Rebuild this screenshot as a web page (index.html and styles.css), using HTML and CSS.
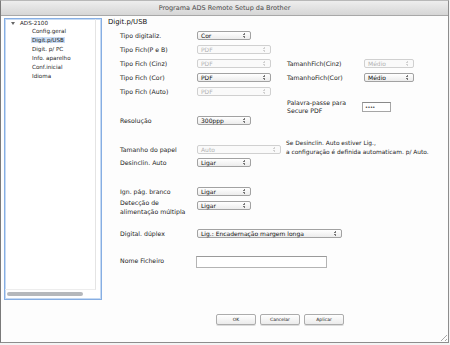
FILE: index.html
```html
<!DOCTYPE html>
<html lang="pt">
<head>
  <meta charset="UTF-8" />
  <title>Programa ADS Remote Setup da Brother</title>
  <link rel="stylesheet" href="styles.css">
</head>
<body>

<div class="window">
  <div class="titlebar">Programa ADS Remote Setup da Brother</div>

  <div class="content">
    <div class="tree">
      <div class="tree-list">
        <div class="node root"><span class="twisty"></span>ADS-2100</div>
        <div class="node">Config.geral</div>
        <div class="node"><span class="selected">Digit.p/USB</span></div>
        <div class="node">Digit. p/ PC</div>
        <div class="node">Info. aparelho</div>
        <div class="node">Conf.inicial</div>
        <div class="node">Idioma</div>
      </div>
      <div class="hscroll"></div>
    </div>

    <div class="panel">
      <h1>Digit.p/USB</h1>

      <div class="form">
        <div class="row">
          <span class="label">Tipo digitaliz.</span>
          <div class="select w-short"><span>Cor</span><i class="arrows"></i></div>
        </div>
        <div class="row">
          <span class="label">Tipo Fich(P e B)</span>
          <div class="select w-mid disabled"><span>PDF</span><i class="arrows"></i></div>
        </div>
        <div class="row r15">
          <span class="label">Tipo Fich (Cinz)</span>
          <div class="select w-mid disabled"><span>PDF</span><i class="arrows"></i></div>
          <span class="label">TamanhFich(Cinz)</span>
          <div class="select w-right disabled"><span>Médio</span><i class="arrows"></i></div>
        </div>
        <div class="row r13">
          <span class="label">Tipo Fich (Cor)</span>
          <div class="select w-mid"><span>PDF</span><i class="arrows"></i></div>
          <span class="label">TamanhoFich(Cor)</span>
          <div class="select w-right"><span>Médio</span><i class="arrows"></i></div>
        </div>
        <div class="row">
          <span class="label">Tipo Fich (Auto)</span>
          <div class="select w-mid disabled"><span>PDF</span><i class="arrows"></i></div>
        </div>
        <div class="row r18">
          <span></span>
          <span></span>
          <span class="label two-line">Palavra-passe para<br>Secure PDF</span>
          <div class="password">••••</div>
        </div>
        <div class="row r9">
          <span class="label">Resolução</span>
          <div class="select w-short"><span>300ppp</span><i class="arrows"></i></div>
        </div>

        <div class="row gap16">
          <span class="label">Tamanho do papel</span>
          <div class="select w-paper disabled"><span>Auto</span><i class="arrows"></i></div>
          <p class="note">Se Desinclin. Auto estiver Lig.,<br>a configuração é definida automaticam. p/ Auto.</p>
        </div>
        <div class="row">
          <span class="label">Desinclin. Auto</span>
          <div class="select w-short"><span>Ligar</span><i class="arrows"></i></div>
        </div>

        <div class="row gap15">
          <span class="label">Ign. pág. branco</span>
          <div class="select w-short"><span>Ligar</span><i class="arrows"></i></div>
        </div>
        <div class="row r15 top">
          <span class="label two-line">Detecção de<br>alimentação múltipla</span>
          <div class="select w-short"><span>Ligar</span><i class="arrows"></i></div>
        </div>

        <div class="row gap13">
          <span class="label">Digital. dúplex</span>
          <div class="select w-duplex"><span>Lig.: Encadernação margem longa</span><i class="arrows"></i></div>
        </div>

        <div class="row gap13">
          <span class="label">Nome Ficheiro</span>
          <div class="textbox"></div>
        </div>
      </div>

      <div class="buttons">
        <button>OK</button>
        <button>Cancelar</button>
        <button>Aplicar</button>
      </div>
    </div>
  </div>

  <div class="grip"></div>
</div>

</body>
</html>
```

FILE: styles.css
```css
body {
  margin: 0;
  background: #f4f4f4;
  font-family: 'DejaVu Sans', Verdana, sans-serif;
  color: #1c1c1c;
}
.window {
  position: relative;
  width: 449px;
  height: 343px;
  box-sizing: border-box;
  border: 1px solid #8d8d8d;
  border-left-color: #7a7a7a;
  border-top-color: #b8b8b8;
  background: #fdfdfd;
  display: flex;
  flex-direction: column;
}
.titlebar {
  height: 14px;
  line-height: 14px;
  border-bottom: 1px solid #a8a8a8;
  background: linear-gradient(#eeeeee, #d6d6d6);
  text-align: center;
  font-size: 6.5px;
  color: #4a4a4a;
}
.content {
  flex: 1;
  display: flex;
}

/* arbre de gauche */
.tree {
  width: 98px;
  height: 282px;
  margin: 2px 0 0 3px;
  box-sizing: border-box;
  border: 1px solid #86aee3;
  box-shadow: 0 0 0 1px #c6daf3 inset;
  background: #fff;
  display: flex;
  flex-direction: column;
}
.tree-list {
  flex: 1;
  margin: 0 5px 0 0;
  border-right: 1px solid #e4e4e4;
  border-bottom: 1px solid #ededed;
  font-size: 5.6px;
}
.node {
  line-height: 9px;
  padding-left: 27px;
}
.node.root {
  line-height: 8px;
  padding-left: 6px;
  display: flex;
  align-items: center;
}
.twisty {
  width: 0;
  height: 0;
  border-left: 2px solid transparent;
  border-right: 2px solid transparent;
  border-top: 3px solid #666;
  margin-right: 5px;
}
.selected {
  background: #cadcf4;
  padding: 0 1px;
  margin-left: -1px;
}
.hscroll {
  width: 76px;
  height: 4px;
  margin: 2px 0 3px 2px;
  border-radius: 2px;
  background: #b5b8bc;
}

/* panneau principal */
.panel {
  flex: 1;
  margin-left: 6px;
  padding-bottom: 17px;
  display: flex;
  flex-direction: column;
}
h1 {
  margin: 0;
  height: 12px;
  line-height: 12px;
  font-size: 6.9px;
  font-weight: normal;
  color: #111;
}
.form {
  padding-left: 12px;
  font-size: 6.2px;
}
.row {
  display: grid;
  grid-template-columns: 77px 90px 77px auto;
  align-items: center;
  height: 14px;
}
.row.r9 { height: 9px; }
.row.r13 { height: 13px; }
.row.r15 { height: 15px; }
.row.r18 { height: 18px; }
.row.gap13 { margin-top: 13px; }
.row.gap15 { margin-top: 15px; }
.row.gap16 { margin-top: 16px; }
.row.top { align-items: start; }
.row.top .label { margin-top: 1px; }
.row.top .select { margin-top: 3px; }
.label {
  white-space: nowrap;
}
.two-line {
  line-height: 8.5px;
}

.select {
  height: 9px;
  box-sizing: border-box;
  border: 1px solid #a2a2a2;
  border-radius: 2px;
  background: linear-gradient(#ffffff, #ececec);
  display: flex;
  align-items: center;
  justify-content: space-between;
  padding: 0 5px 0 3px;
  font-size: 6px;
  color: #111;
}
.select.disabled {
  border-color: #d0d0d0;
  background: #fafafa;
  color: #b2b2b2;
}
.arrows {
  width: 2px;
  height: 5px;
  background:
    linear-gradient(currentColor, currentColor) 0.5px 0 / 1px 1px no-repeat,
    linear-gradient(currentColor, currentColor) 0 1px / 2px 1px no-repeat,
    linear-gradient(currentColor, currentColor) 0 3px / 2px 1px no-repeat,
    linear-gradient(currentColor, currentColor) 0.5px 4px / 1px 1px no-repeat;
  opacity: 0.55;
}
.w-short { width: 54px; }
.w-mid { width: 74px; }
.w-paper { width: 84px; }
.w-right { width: 50px; }
.w-duplex { width: 145px; grid-column: 2 / 4; }

.password {
  width: 29px;
  height: 10px;
  box-sizing: border-box;
  border: 1px solid #a6a6a6;
  border-top-color: #8a8a8a;
  background: #fff;
  font-size: 5px;
  line-height: 8px;
  padding-left: 2px;
  letter-spacing: -0.5px;
  margin-left: -2px;
}
.textbox {
  width: 131px;
  height: 12px;
  box-sizing: border-box;
  border: 1px solid #b4b4b4;
  border-top-color: #9a9a9a;
  background: #fff;
  grid-column: 2 / 4;
  margin-left: -1px;
  margin-top: 3px;
}
.note {
  grid-column: 3 / 5;
  align-self: start;
  margin: -2px 0 0 -1px;
  line-height: 9px;
  white-space: nowrap;
  font-size: 5.9px;
}

.buttons {
  margin-top: auto;
  padding-left: 108px;
  display: flex;
  gap: 4px;
}
.buttons button {
  width: 40px;
  height: 11px;
  padding: 0;
  border: 1px solid #acacac;
  border-radius: 2px;
  background: linear-gradient(#ffffff, #ebebeb);
  box-shadow: 0 1px 0 #dcdcdc;
  font-family: 'DejaVu Sans', Verdana, sans-serif;
  font-size: 4.5px;
  color: #222;
}

.grip {
  position: absolute;
  right: 1px;
  bottom: 1px;
  width: 7px;
  height: 7px;
  background: repeating-linear-gradient(135deg, transparent 0 2px, #a8a8a8 2px 3px);
  clip-path: polygon(100% 0, 100% 100%, 0 100%);
}
```
